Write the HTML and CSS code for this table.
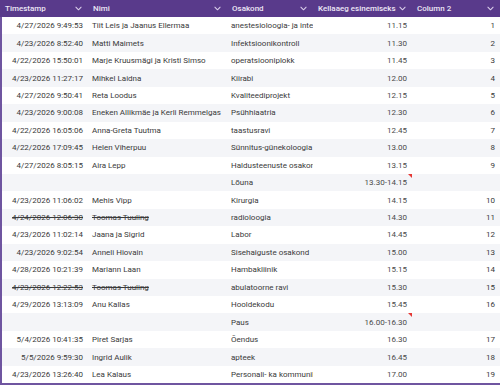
FILE: index.html
```html
<!DOCTYPE html>
<html>
<head>
<meta charset="utf-8">
<link rel="stylesheet" href="styles.css">
</head>
<body>
<div class="table">
  <div class="head">
    <div class="th">Timestamp<svg class="chev" viewBox="0 0 8 5"><path d="M1 1l3 3 3-3"/></svg></div>
    <div class="th">Nimi<svg class="chev" viewBox="0 0 8 5"><path d="M1 1l3 3 3-3"/></svg></div>
    <div class="th">Osakond<svg class="chev" viewBox="0 0 8 5"><path d="M1 1l3 3 3-3"/></svg></div>
    <div class="th">Kellaaeg esinemiseks<svg class="chev" viewBox="0 0 8 5"><path d="M1 1l3 3 3-3"/></svg></div>
    <div class="th">Column 2<svg class="chev" viewBox="0 0 8 5"><path d="M1 1l3 3 3-3"/></svg></div>
  </div>
  <div class="body">
    <div class="row"><div class="c r">4/27/2026 9:49:53</div><div class="c">Tiit Leis ja Jaanus Ellermaa</div><div class="c">anestesioloogia- ja inter</div><div class="c r t">11.15</div><div class="c r">1</div></div>
    <div class="row"><div class="c r">4/23/2026 8:52:40</div><div class="c">Matti Maimets</div><div class="c">Infektsioonikontroll</div><div class="c r t">11.30</div><div class="c r">2</div></div>
    <div class="row"><div class="c r">4/22/2026 15:50:01</div><div class="c">Marje Kruusmägi ja Kristi Simso</div><div class="c">operatsiooniplokk</div><div class="c r t">11.45</div><div class="c r">3</div></div>
    <div class="row"><div class="c r">4/23/2026 11:27:17</div><div class="c">Mihkel Laidna</div><div class="c">Kiirabi</div><div class="c r t">12.00</div><div class="c r">4</div></div>
    <div class="row"><div class="c r">4/27/2026 9:50:41</div><div class="c">Reta Loodus</div><div class="c">Kvaliteediprojekt</div><div class="c r t">12.15</div><div class="c r">5</div></div>
    <div class="row"><div class="c r">4/23/2026 9:00:08</div><div class="c">Eneken Allikmäe ja Kerli Remmelgas</div><div class="c">Psühhiaatria</div><div class="c r t">12.30</div><div class="c r">6</div></div>
    <div class="row"><div class="c r">4/22/2026 16:05:06</div><div class="c">Anna-Greta Tuutma</div><div class="c">taastusravi</div><div class="c r t">12.45</div><div class="c r">7</div></div>
    <div class="row"><div class="c r">4/22/2026 17:09:45</div><div class="c">Helen Viherpuu</div><div class="c">Sünnitus-günekoloogia</div><div class="c r t">13.00</div><div class="c r">8</div></div>
    <div class="row"><div class="c r">4/27/2026 8:05:15</div><div class="c">Aira Lepp</div><div class="c">Haldusteenuste osakon</div><div class="c r t">13.15</div><div class="c r">9</div></div>
    <div class="row"><div class="c r"></div><div class="c"></div><div class="c">Lõuna</div><div class="c r t note">13.30-14.15</div><div class="c r"></div></div>
    <div class="row"><div class="c r">4/23/2026 11:06:02</div><div class="c">Mehis Vipp</div><div class="c">Kirurgia</div><div class="c r t">14.15</div><div class="c r">10</div></div>
    <div class="row"><div class="c r s">4/24/2026 12:06:30</div><div class="c s">Toomas Tuuling</div><div class="c">radioloogia</div><div class="c r t">14.30</div><div class="c r">11</div></div>
    <div class="row"><div class="c r">4/23/2026 11:02:14</div><div class="c">Jaana ja Sigrid</div><div class="c">Labor</div><div class="c r t">14.45</div><div class="c r">12</div></div>
    <div class="row"><div class="c r">4/23/2026 9:02:54</div><div class="c">Anneli Hiovain</div><div class="c">Sisehaiguste osakond</div><div class="c r t">15.00</div><div class="c r">13</div></div>
    <div class="row"><div class="c r">4/28/2026 10:21:39</div><div class="c">Mariann Laan</div><div class="c">Hambakliinik</div><div class="c r t">15.15</div><div class="c r">14</div></div>
    <div class="row"><div class="c r s">4/23/2026 12:22:53</div><div class="c s">Toomas Tuuling</div><div class="c">abulatoorne ravi</div><div class="c r t">15.30</div><div class="c r">15</div></div>
    <div class="row"><div class="c r">4/29/2026 13:13:09</div><div class="c">Anu Kallas</div><div class="c">Hooldekodu</div><div class="c r t">15.45</div><div class="c r">16</div></div>
    <div class="row"><div class="c r"></div><div class="c"></div><div class="c">Paus</div><div class="c r t note">16.00-16.30</div><div class="c r"></div></div>
    <div class="row"><div class="c r">5/4/2026 10:41:35</div><div class="c">Piret Sarjas</div><div class="c">Õendus</div><div class="c r t">16.30</div><div class="c r">17</div></div>
    <div class="row"><div class="c r">5/5/2026 9:59:30</div><div class="c">Ingrid Aulik</div><div class="c">apteek</div><div class="c r t">16.45</div><div class="c r">18</div></div>
    <div class="row"><div class="c r">4/23/2026 13:26:40</div><div class="c">Lea Kalaus</div><div class="c">Personali- ka kommunik</div><div class="c r t">17.00</div><div class="c r">19</div></div>
  </div>
</div>
</body>
</html>
```
FILE: styles.css
```css
html, body {
  margin: 0;
  padding: 0;
  background: #fff;
}
body {
  font-family: Roboto, "Liberation Sans", sans-serif;
  font-size: 8px;
  color: #3a3a3a;
}
.table {
  width: 500px;
  height: 385px;
  display: flex;
  flex-direction: column;
  overflow: hidden;
}
.head, .row {
  display: grid;
  grid-template-columns: 88px 139px 86px 99px 88px;
}
.head {
  height: 17px;
  background: #593a8b;
  color: #ece6f5;
  font-weight: 500;
  flex: none;
}
.th {
  display: flex;
  align-items: center;
  justify-content: space-between;
  padding: 0 6.5px 0 5px;
  white-space: nowrap;
  overflow: hidden;
}
.chev {
  width: 7px;
  height: 5px;
  flex: none;
}
.chev path {
  fill: none;
  stroke: #d9cdea;
  stroke-width: 1.2;
  stroke-linecap: round;
  stroke-linejoin: round;
}
.body {
  flex: 1;
  border-left: 2px solid #6f55a0;
  border-bottom: 2px solid #6f55a0;
  display: flex;
  flex-direction: column;
}
.row {
  height: 17.45px;
  flex: none;
  grid-template-columns: 86px 139px 86px 99px 88px;
}
.row:nth-child(even) {
  background: #f4f5f8;
}
.c {
  display: flex;
  align-items: center;
  padding: 0 0 0 4px;
  white-space: nowrap;
  overflow: hidden;
  position: relative;
}
.c.r {
  justify-content: flex-end;
  padding: 0 5px 0 0;
}
.t {
  color: #4a4a4a;
}
.s {
  text-decoration: line-through;
}
.note::after {
  content: "";
  position: absolute;
  top: 0;
  right: 0;
  border-top: 4px solid #e53935;
  border-left: 4px solid transparent;
}
```
